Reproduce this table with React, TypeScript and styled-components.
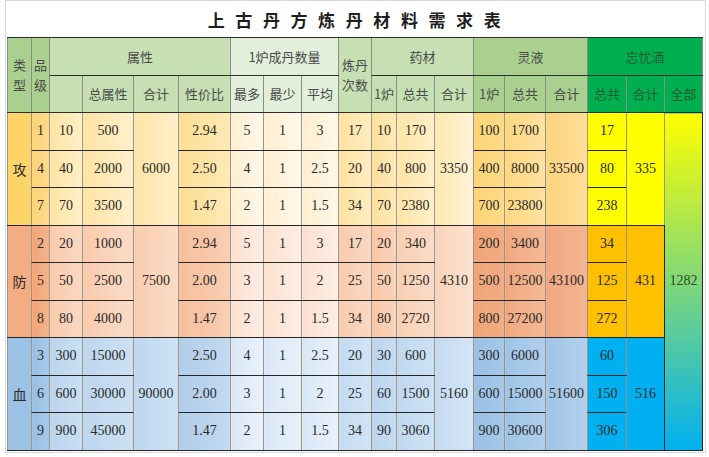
import React from 'react';
import styled, {createGlobalStyle} from 'styled-components';

const GlobalStyle = createGlobalStyle`
  html, body {
    margin: 0;
    padding: 0;
    background: #fff;
  }
  body {
    font-family: "Liberation Serif", "Noto Sans CJK SC", serif;
    color: #262626;
  }
`;

const Frame = styled.div`
  margin-left: 5px;
  width: 695px;
  height: 451px;
  border: 1px solid #d3d8e1;
  padding: 0 3px 0 1px;
  display: flex;
  flex-direction: column;
`;

const Title = styled.h1`
  margin: 0;
  height: 36px;
  display: flex;
  align-items: center;
  justify-content: center;
  padding-left: 10px;
  font-family: "Noto Sans CJK SC", sans-serif;
  font-size: 17px;
  font-weight: 700;
  letter-spacing: 10.6px;
  color: #1e1e1e;
`;

const Sheet = styled.table`
  border-collapse: collapse;
  table-layout: fixed;
  width: 695px;
  border: 1px solid #1f1f1f;
`;

const HeadRow = styled.tr<{$h: number}>`
  height: ${p => p.$h}px;
`;

const BodyRow = styled.tr`
  height: 37.5px;
`;

type HeadTone = 'mid' | 'light' | 'pale' | 'deep';

const headColors: Record<HeadTone, string> = {
  mid: '#a9d08e',
  light: '#c6e0b4',
  pale: '#e2efda',
  deep: '#00b050',
};

const HeadCell = styled.th<{$tone: HeadTone}>`
  padding: 0;
  font-family: "Noto Sans CJK SC", sans-serif;
  font-size: 13px;
  font-weight: 400;
  line-height: 20px;
  color: ${p => (p.$tone === 'deep' ? '#1f5e33' : '#4a4a4a')};
  background: ${p => headColors[p.$tone]};
  border-top: 1px solid #2d2d2d;
  border-bottom: 1px solid #2d2d2d;
  border-left: 1px solid rgba(40, 50, 30, 0.55);
  border-right: 1px solid rgba(40, 50, 30, 0.55);
  text-align: center;
  vertical-align: middle;
  white-space: nowrap;
  overflow: hidden;
`;

const Cell = styled.td<{$bg: string; $fade?: string; $cjk?: boolean}>`
  padding: 0;
  font-family: ${p => (p.$cjk ? '"Noto Sans CJK SC", sans-serif' : '"Liberation Serif", "Noto Sans CJK SC", serif')};
  font-size: ${p => (p.$cjk ? '14px' : '14px')};
  text-align: center;
  vertical-align: middle;
  white-space: nowrap;
  overflow: hidden;
  color: #2a2a2a;
  background: ${p => (p.$fade ? `linear-gradient(90deg, ${p.$bg}, ${p.$fade})` : p.$bg)};
  border-top: 1px solid #262626;
  border-bottom: 1px solid #262626;
  border-left: 1px solid rgba(60, 40, 20, 0.5);
  border-right: 1px solid rgba(60, 40, 20, 0.5);
`;

const AllCell = styled.td`
  padding: 0;
  font-size: 14px;
  text-align: center;
  vertical-align: middle;
  color: #2f4a2a;
  background: linear-gradient(180deg, #ffff00, #00b0f0);
  border: 1px solid #262626;
`;

const colWidths = [24, 18, 33, 51, 45, 52, 33, 38, 37, 33, 25, 38, 39, 31, 41, 42, 39, 38, 38];

type Fill = [string, string?];

type Palette = {
  type: Fill;
  grade: Fill;
  base: Fill;
  total: Fill;
  sum: Fill;
  ratio: Fill;
  furnace: Fill;
  times: Fill;
  herb1: Fill;
  herbTotal: Fill;
  herbSum: Fill;
  liq1: Fill;
  liqTotal: Fill;
  liqSum: Fill;
  wine: Fill;
};

const attack: Palette = {
  type: ['#fdd468'],
  grade: ['#fcd378', '#fddb8a'],
  base: ['#fee4a2', '#fff0c8'],
  total: ['#fee4a4', '#fff0cc'],
  sum: ['#fee5a8', '#ffefc8'],
  ratio: ['#fddd94', '#feeab6'],
  furnace: ['#ffeed0', '#fff8ea'],
  times: ['#fee2a0', '#ffecc2'],
  herb1: ['#fee19e', '#feeab6'],
  herbTotal: ['#fee5a8', '#fff0c8'],
  herbSum: ['#fee7b0', '#fff3d8'],
  liq1: ['#fdd475', '#fddb88'],
  liqTotal: ['#fdd882', '#fee2a0'],
  liqSum: ['#fdd47e', '#fede98'],
  wine: ['#ffff00'],
};

const defense: Palette = {
  type: ['#f4ad82'],
  grade: ['#f0a576', '#f4b48c'],
  base: ['#f8caac', '#fad8c2'],
  total: ['#f8caac', '#fbdcc8'],
  sum: ['#f9cdb0', '#fbdcc6'],
  ratio: ['#f6be9c', '#f8ceb2'],
  furnace: ['#fbe0d0', '#fdeee4'],
  times: ['#f8ccae', '#fad8c2'],
  herb1: ['#f8c8a8', '#f9d2b8'],
  herbTotal: ['#f9cfb2', '#fbdcc8'],
  herbSum: ['#fad3ba', '#fce2d0'],
  liq1: ['#efa476', '#f2ad84'],
  liqTotal: ['#f0a87e', '#f4b896'],
  liqSum: ['#f0a982', '#f3b490'],
  wine: ['#ffc000'],
};

const health: Palette = {
  type: ['#9cc2e5'],
  grade: ['#98bee3', '#a8cae8'],
  base: ['#bbd5ee', '#c9def2'],
  total: ['#bcd6ee', '#cde0f3'],
  sum: ['#bed7ef', '#cfe2f4'],
  ratio: ['#b0cdea', '#c3daf0'],
  furnace: ['#d9e7f6', '#e8f1fa'],
  times: ['#c3dbf1', '#d2e4f5'],
  herb1: ['#bad5ee', '#c6dcf1'],
  herbTotal: ['#bfd8ef', '#cde1f4'],
  herbSum: ['#c3daf0', '#d4e6f6'],
  liq1: ['#9ac0e4', '#a6c8e8'],
  liqTotal: ['#9ec4e6', '#b0cfeb'],
  liqSum: ['#a0c5e7', '#b2d0ec'],
  wine: ['#00b0f0'],
};

type Row = {
  grade: string;
  base: string;
  total: string;
  ratio: string;
  max: string;
  min: string;
  avg: string;
  times: string;
  herb1: string;
  herbTotal: string;
  liq1: string;
  liqTotal: string;
  wine: string;
};

type Section = {
  name: string;
  pal: Palette;
  sum: string;
  herbSum: string;
  liqSum: string;
  wineSum: string;
  rows: Row[];
};

const sections: Section[] = [
  {
    name: '攻', pal: attack, sum: '6000', herbSum: '3350', liqSum: '33500', wineSum: '335',
    rows: [
      {grade: '1', base: '10', total: '500', ratio: '2.94', max: '5', min: '1', avg: '3', times: '17', herb1: '10', herbTotal: '170', liq1: '100', liqTotal: '1700', wine: '17'},
      {grade: '4', base: '40', total: '2000', ratio: '2.50', max: '4', min: '1', avg: '2.5', times: '20', herb1: '40', herbTotal: '800', liq1: '400', liqTotal: '8000', wine: '80'},
      {grade: '7', base: '70', total: '3500', ratio: '1.47', max: '2', min: '1', avg: '1.5', times: '34', herb1: '70', herbTotal: '2380', liq1: '700', liqTotal: '23800', wine: '238'},
    ],
  },
  {
    name: '防', pal: defense, sum: '7500', herbSum: '4310', liqSum: '43100', wineSum: '431',
    rows: [
      {grade: '2', base: '20', total: '1000', ratio: '2.94', max: '5', min: '1', avg: '3', times: '17', herb1: '20', herbTotal: '340', liq1: '200', liqTotal: '3400', wine: '34'},
      {grade: '5', base: '50', total: '2500', ratio: '2.00', max: '3', min: '1', avg: '2', times: '25', herb1: '50', herbTotal: '1250', liq1: '500', liqTotal: '12500', wine: '125'},
      {grade: '8', base: '80', total: '4000', ratio: '1.47', max: '2', min: '1', avg: '1.5', times: '34', herb1: '80', herbTotal: '2720', liq1: '800', liqTotal: '27200', wine: '272'},
    ],
  },
  {
    name: '血', pal: health, sum: '90000', herbSum: '5160', liqSum: '51600', wineSum: '516',
    rows: [
      {grade: '3', base: '300', total: '15000', ratio: '2.50', max: '4', min: '1', avg: '2.5', times: '20', herb1: '30', herbTotal: '600', liq1: '300', liqTotal: '6000', wine: '60'},
      {grade: '6', base: '600', total: '30000', ratio: '2.00', max: '3', min: '1', avg: '2', times: '25', herb1: '60', herbTotal: '1500', liq1: '600', liqTotal: '15000', wine: '150'},
      {grade: '9', base: '900', total: '45000', ratio: '1.47', max: '2', min: '1', avg: '1.5', times: '34', herb1: '90', herbTotal: '3060', liq1: '900', liqTotal: '30600', wine: '306'},
    ],
  },
];

function fill(f: Fill) {
  return {$bg: f[0], $fade: f[1]};
}

export default function App() {
  return (
    <>
      <GlobalStyle/>
      <Frame>
        <Title>上古丹方炼丹材料需求表</Title>
        <Sheet>
          <colgroup>
            {colWidths.map((w, i) => <col key={i} style={{width: w}}/>)}
          </colgroup>
          <thead>
            <HeadRow $h={38}>
              <HeadCell $tone="mid" rowSpan={2}>类<br/>型</HeadCell>
              <HeadCell $tone="mid" rowSpan={2}>品<br/>级</HeadCell>
              <HeadCell $tone="light" colSpan={4}>属性</HeadCell>
              <HeadCell $tone="pale" colSpan={3}>1炉成丹数量</HeadCell>
              <HeadCell $tone="light" rowSpan={2}>炼丹<br/>次数</HeadCell>
              <HeadCell $tone="light" colSpan={3}>药材</HeadCell>
              <HeadCell $tone="mid" colSpan={3}>灵液</HeadCell>
              <HeadCell $tone="deep" colSpan={3}>忘忧酒</HeadCell>
            </HeadRow>
            <HeadRow $h={37}>
              <HeadCell $tone="light"/>
              <HeadCell $tone="light">总属性</HeadCell>
              <HeadCell $tone="light">合计</HeadCell>
              <HeadCell $tone="light">性价比</HeadCell>
              <HeadCell $tone="pale">最多</HeadCell>
              <HeadCell $tone="pale">最少</HeadCell>
              <HeadCell $tone="pale">平均</HeadCell>
              <HeadCell $tone="light">1炉</HeadCell>
              <HeadCell $tone="light">总共</HeadCell>
              <HeadCell $tone="light">合计</HeadCell>
              <HeadCell $tone="mid">1炉</HeadCell>
              <HeadCell $tone="mid">总共</HeadCell>
              <HeadCell $tone="mid">合计</HeadCell>
              <HeadCell $tone="deep">总共</HeadCell>
              <HeadCell $tone="deep">合计</HeadCell>
              <HeadCell $tone="deep">全部</HeadCell>
            </HeadRow>
          </thead>
          <tbody>
            {sections.map((s, si) => s.rows.map((r, ri) => {
              const p = s.pal;
              const first = ri === 0;
              return (
                <BodyRow key={s.name + ri}>
                  {first && <Cell rowSpan={3} $cjk {...fill(p.type)}>{s.name}</Cell>}
                  <Cell {...fill(p.grade)}>{r.grade}</Cell>
                  <Cell {...fill(p.base)}>{r.base}</Cell>
                  <Cell {...fill(p.total)}>{r.total}</Cell>
                  {first && <Cell rowSpan={3} {...fill(p.sum)}>{s.sum}</Cell>}
                  <Cell {...fill(p.ratio)}>{r.ratio}</Cell>
                  <Cell {...fill(p.furnace)}>{r.max}</Cell>
                  <Cell {...fill(p.furnace)}>{r.min}</Cell>
                  <Cell {...fill(p.furnace)}>{r.avg}</Cell>
                  <Cell {...fill(p.times)}>{r.times}</Cell>
                  <Cell {...fill(p.herb1)}>{r.herb1}</Cell>
                  <Cell {...fill(p.herbTotal)}>{r.herbTotal}</Cell>
                  {first && <Cell rowSpan={3} {...fill(p.herbSum)}>{s.herbSum}</Cell>}
                  <Cell {...fill(p.liq1)}>{r.liq1}</Cell>
                  <Cell {...fill(p.liqTotal)}>{r.liqTotal}</Cell>
                  {first && <Cell rowSpan={3} {...fill(p.liqSum)}>{s.liqSum}</Cell>}
                  <Cell {...fill(p.wine)}>{r.wine}</Cell>
                  {first && <Cell rowSpan={3} {...fill(p.wine)}>{s.wineSum}</Cell>}
                  {si === 0 && first && <AllCell rowSpan={9}>1282</AllCell>}
                </BodyRow>
              );
            }))}
          </tbody>
        </Sheet>
      </Frame>
    </>
  );
}
